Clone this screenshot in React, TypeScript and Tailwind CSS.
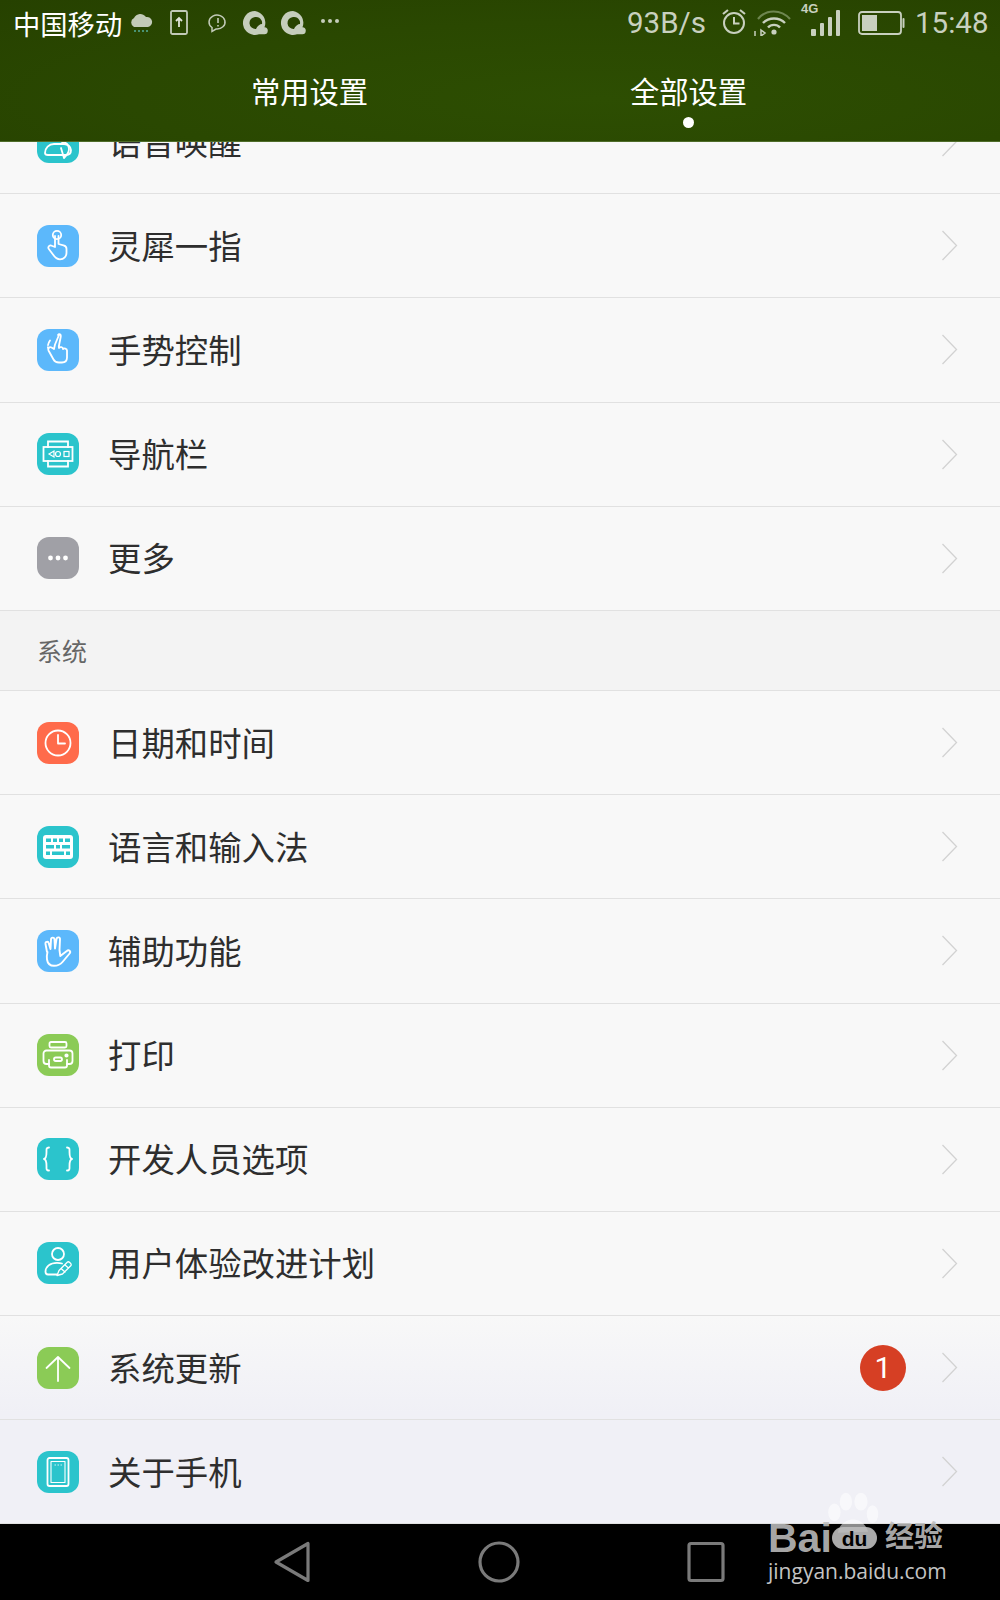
import React from "react";

const S = { fill: "none", stroke: "white", strokeWidth: 1.8, strokeLinecap: "round" as const, strokeLinejoin: "round" as const };

const Voice = () => (
  <g {...S}>
    <path d="M8 32c0-5 4-9 9-9h10c4 0 7 3 7 6s-2 5-5 5H11c-2 0-3-1-3-2z" />
    <path d="M25 21c4 0 7 3 7 7s-2 6-5 9M24 27l3 10" />
  </g>
);
const Tap = () => (
  <g {...S}>
    <circle cx="20" cy="10" r="4.2" />
    <path d="M18 11v11l-4-1.500a2.200 2.200 0 0 0-2 3.700l4 5.300c2 3 4.500 4.800 7 4.800 4 0 6.500-3 6.500-6.500v-4c0-2-1-3-3-3.500l-5-1.300V11" />
  </g>
);
const Gesture = () => (
  <g {...S}>
    <path d="M13 11.500A10 10 0 0 0 11 19" strokeDasharray="5 2" />
    <path d="M22 6l-4 9.500-1 4.500-2.500-1.500c-2-1-4 1-3 3l5 9c1 2 3 3 5.500 3h3c3 0 5-2 5-5v-7c0-2-3-2.500-4-1.500 0-2-3-2.500-4-1l-.2-1.500 2-10c.4-2-1.600-3.500-2.800-1.500z" />
  </g>
);
const Nav = () => (
  <g {...S} strokeLinecap="square" strokeLinejoin="miter">
    <path d="M11 14V8.500h20V14M11 28v5.500h20V28" />
    <rect x="6.500" y="14" width="29" height="14" />
    <path d="M12 21l5-3v6z" strokeWidth="1.200" />
    <circle cx="21" cy="21" r="2.500" strokeWidth="1.200" />
    <rect x="27" y="18.500" width="5" height="5" strokeWidth="1.200" />
  </g>
);
const Dots = () => (
  <g fill="white">
    <circle cx="13.500" cy="21" r="2.400" />
    <circle cx="21" cy="21" r="2.400" />
    <circle cx="28.500" cy="21" r="2.400" />
  </g>
);
const Clock = () => (
  <g {...S}>
    <circle cx="21" cy="21" r="12.500" />
    <path d="M21 13v8.500h7" />
  </g>
);
const Keyboard = () => (
  <g>
    <rect x="6" y="9" width="30" height="24" rx="3" fill="white" />
    <g fill="#2bc4cc">
      <rect x="9" y="12.500" width="5" height="3.500" />
      <rect x="16" y="12.500" width="4" height="3.500" />
      <rect x="22" y="12.500" width="4" height="3.500" />
      <rect x="28" y="12.500" width="5" height="3.500" />
      <rect x="9" y="19" width="8" height="3.500" />
      <rect x="19" y="19" width="4" height="3.500" />
      <rect x="25" y="19" width="8" height="3.500" />
      <rect x="9" y="25.500" width="4" height="3.500" />
      <rect x="15" y="25.500" width="12" height="3.500" />
      <rect x="29" y="25.500" width="4" height="3.500" />
    </g>
  </g>
);
const Hand = () => (
  <g {...S} strokeWidth="1.900">
    <path d="M10 22L8.500 14c-.4-2.500 2.800-3 3.300-.6L13.500 19l.5-9.500c.1-2.600 3.400-2.500 3.500 0l.5 9 1.500-9.500c.5-2.500 3.800-2 3.500.5L22.500 20l.8 6 6.500-5c2-1.800 4.500.5 2.800 2.500l-7.100 8.500c-2 2.500-5 3.800-8.500 3.800-4.500 0-6.500-3-7-6.300-.3-2.500-.3-4.500.5-7.500z" />
  </g>
);
const Printer = () => (
  <g {...S} strokeWidth="1.800">
    <rect x="12.500" y="8" width="17" height="5.500" rx="1.500" />
    <path d="M12 30H9.500A3 3 0 0 1 6.500 27v-7.500a3 3 0 0 1 3-3h23a3 3 0 0 1 3 3V27a3 3 0 0 1-3 3H30" />
    <path d="M12 26v5.500a2 2 0 0 0 2 2h14a2 2 0 0 0 2-2V26" />
    <rect x="17" y="23.500" width="8" height="3.500" rx="1.700" />
    <circle cx="29.500" cy="21.500" r="1.200" fill="white" />
  </g>
);
const Braces = () => (
  <g {...S}>
    <path d="M12 9.500c-3 0-2.500 2-2.500 4.500s0 6.500-2.500 7c2.500.5 2.500 4.500 2.500 7s-.5 4.500 2.500 4.500" />
    <path d="M30 9.500c3 0 2.500 2 2.500 4.500s0 6.500 2.500 7c-2.500.5-2.500 4.500-2.500 7s.5 4.500-2.500 4.500" />
  </g>
);
const User = () => (
  <g {...S}>
    <circle cx="21" cy="12" r="6" />
    <path d="M25 21.500c-1.500-.5-3-.7-5-.7-7 0-11.500 4-11.500 9 0 1.800 1 2.700 2.500 2.700h9" />
    <path d="M20 33.500l2-5 8.500-8.500c1-1 4.500 2 3.500 3.500L25.500 32zM24 26.500l4 3.500M28 23l3.500 3" strokeWidth="1.300" />
  </g>
);
const Up = () => (
  <g {...S}>
    <path d="M21 34V10M9.500 21L21 10l11.500 11" />
  </g>
);
const Phone = () => (
  <g {...S}>
    <rect x="10.500" y="7" width="21" height="28" rx="2" />
    <rect x="14" y="10.500" width="14" height="21" strokeWidth="1.100" />
    <path d="M18 14h.4M21 14h.4M24 14h.4" strokeWidth="1" />
  </g>
);

const Icon = ({ bg, children }: { bg: string; children: React.ReactNode }) => (
  <span className={`block w-[42px] h-[42px] rounded-[12px] shrink-0 ${bg}`}>
    <svg width="42" height="42" viewBox="0 0 42 42">{children}</svg>
  </span>
);

const Chevron = () => (
  <svg width="17" height="31" viewBox="0 0 17 31" className="absolute left-[941px]">
    <path d="M1.500 1L15.500 15.500L1.500 30" fill="none" stroke="#d2d2d2" strokeWidth="1.300" />
  </svg>
);

const Row = ({ bg, icon, label, badge, cls }: { bg: string; icon: React.ReactNode; label: string; badge?: boolean; cls?: string }) => (
  <div className={`relative flex items-center shrink-0 h-[104.2px] pl-[37px] border-b-[1.500px] border-[#e1e1e1] ${cls ?? ""}`}>
    <Icon bg={bg}>{icon}</Icon>
    <span className="ml-[29px] mb-[2px] text-[33.4px] leading-[42px] text-[#2e2e2e]">{label}</span>
    {badge && (
      <span className="absolute left-[860px] w-[46px] h-[46px] rounded-full bg-[#d63f24] flex items-center justify-center text-white text-[30px] leading-none font-['Roboto',sans-serif]">
        1
      </span>
    )}
    <Chevron />
  </div>
);

const TEAL = "bg-[#2bc4cc]";
const BLUE = "bg-[#5cb8fb]";
const GREEN = "bg-[#8bcb56]";

export default function App() {
  return (
    <div className="relative w-[1000px] h-[1600px] overflow-hidden bg-black font-['Noto_Sans_CJK_SC','Noto_Sans',sans-serif]">
      <header className="relative z-10 h-[142px] border-b border-[#4f6d2a] bg-[radial-gradient(ellipse_at_60%_70%,#2d4e02_0%,#2a4801_55%,#264100_100%)]">
        <div className="flex items-center h-[46px] pl-[13px]">
          <span className="text-[27.3px] leading-[46px] text-white w-[113px]">中国移动</span>
          <svg width="26" height="22" viewBox="0 0 26 22" className="ml-[2px]">
            <path d="M6 15a5 5 0 0 1 0-9 7 7 0 0 1 12-1 5 5 0 0 1 2 10z" fill="#c2cab8" />
            <path d="M7 18v2M11 18v2M15 18v2M19 18v2" stroke="#5fc6c0" strokeWidth="1.200" />
          </svg>
          <svg width="18" height="26" viewBox="0 0 18 26" className="ml-[16px]">
            <rect x="1" y="1" width="16" height="23" rx="1.500" fill="none" stroke="#c2cab8" strokeWidth="1.800" />
            <path d="M9 17V8M6 11l3-3 3 3" fill="none" stroke="#e0e4da" strokeWidth="1.800" />
          </svg>
          <svg width="20" height="20" viewBox="0 0 20 20" className="ml-[20px]">
            <path d="M4 14.500A8 7 0 1 1 8 16l-4 2.500z" fill="none" stroke="#c2cab8" strokeWidth="1.500" />
            <path d="M10 5v5M10 12v1.500" stroke="#c2cab8" strokeWidth="1.600" />
          </svg>
          <svg width="26" height="26" viewBox="0 0 26 26" className="ml-[14px]">
            <path d="M13 1a12 12 0 1 0 4 23.300h5a3.500 3.500 0 0 0 .5-7A12 12 0 0 0 13 1z" fill="#c5cdbc" />
            <path d="M13 7a6 6 0 1 0 1 12c1-3 4-5 6-5A6 6 0 0 0 13 7z" fill="#284300" />
          </svg>
          <svg width="26" height="26" viewBox="0 0 26 26" className="ml-[12px]">
            <path d="M13 1a12 12 0 1 0 4 23.300h5a3.500 3.500 0 0 0 .5-7A12 12 0 0 0 13 1z" fill="#c5cdbc" />
            <path d="M13 7a6 6 0 1 0 1 12c1-3 4-5 6-5A6 6 0 0 0 13 7z" fill="#284300" />
          </svg>
          <svg width="20" height="6" viewBox="0 0 20 6" className="ml-[14px] mb-[4px]">
            <circle cx="3" cy="3" r="2" fill="#c5cdbc" />
            <circle cx="10" cy="3" r="2" fill="#c5cdbc" />
            <circle cx="17" cy="3" r="2" fill="#c5cdbc" />
          </svg>
          <span className="ml-[287px] w-[86px] text-[29.5px] leading-[46px] text-[#c8d0bf] font-['Roboto',sans-serif]">93B/s</span>
          <svg width="26" height="27" viewBox="0 0 26 27" className="ml-[8px] mb-[3px]">
            <circle cx="13" cy="15" r="10" fill="none" stroke="#c8d0bf" strokeWidth="2" />
            <path d="M13 9v6.500h5.500" fill="none" stroke="#c8d0bf" strokeWidth="2" />
            <path d="M2 6l5-4M24 6l-5-4" stroke="#c8d0bf" strokeWidth="2.200" />
          </svg>
          <svg width="38" height="28" viewBox="0 0 38 28" className="ml-[7px] mb-[3px]">
            <path d="M4 11C12 1 27 1 36 11" fill="none" stroke="#6e8650" strokeWidth="2.200" />
            <path d="M9 15c6-6 16-6 22 0M14 19.500c3-3.500 9-3.500 12 0" fill="none" stroke="#c8d0bf" strokeWidth="2.400" />
            <circle cx="20" cy="24" r="2.600" fill="#c8d0bf" />
            <path d="M1 28v-5M7 22l4 3-4 3z" fill="none" stroke="#c8d0bf" strokeWidth="1.500" />
          </svg>
          <div className="relative ml-[9px] w-[42px] h-[36px]">
            <span className="absolute left-0 top-[-3px] text-[13px] leading-[13px] font-bold text-[#c8d0bf] font-['Liberation_Sans',sans-serif]">4G</span>
            <svg width="32" height="26" viewBox="0 0 32 26" className="absolute left-[9px] top-[5px]">
              <rect x="1" y="19" width="5" height="7" rx="1" fill="#c8d0bf" />
              <rect x="10" y="13" width="4" height="13" rx="1" fill="#c8d0bf" />
              <rect x="18" y="7" width="4" height="19" rx="1" fill="#c8d0bf" />
              <rect x="26" y="0" width="4" height="26" rx="1" fill="#c8d0bf" />
            </svg>
          </div>
          <svg width="47" height="24" viewBox="0 0 47 24" className="ml-[15px]">
            <rect x="1" y="1" width="42" height="22" rx="3" fill="none" stroke="#c8d0bf" strokeWidth="1.800" />
            <rect x="4" y="4" width="15" height="16" fill="#c8d0bf" />
            <rect x="44.500" y="7" width="2" height="10" rx="1" fill="#c8d0bf" />
          </svg>
          <span className="ml-[10px] text-[29.5px] leading-[46px] text-[#c8d0bf] font-['Roboto',sans-serif]">15:48</span>
        </div>
        <div className="grid grid-cols-2 pl-[120px] pr-[122px]">
          <div className="flex justify-center"><span className="mt-[24px] text-[29.3px] leading-[40px] text-white">常用设置</span></div>
          <div className="relative flex justify-center">
            <span className="mt-[24px] text-[29.3px] leading-[40px] text-white">全部设置</span>
            <span className="absolute top-[71px] w-[11px] h-[11px] rounded-full bg-white" />
          </div>
        </div>
      </header>

      <main className="flex flex-col h-[1382px] bg-[linear-gradient(to_bottom,#f8f8f8_0%,#f8f8f8_85%,#f0f0f6_92%,#f0f0f6_100%)]">
        <div className="flex flex-col -mt-[52px]">
          <Row bg={TEAL} icon={<Voice />} label="语音唤醒" />
          <Row bg={BLUE} icon={<Tap />} label="灵犀一指" />
          <Row bg={BLUE} icon={<Gesture />} label="手势控制" />
          <Row bg={TEAL} icon={<Nav />} label="导航栏" />
          <Row bg="bg-[#a0a0a6]" icon={<Dots />} label="更多" />
          <div className="flex items-center shrink-0 h-[80px] pl-[37px] bg-[#f3f3f3] border-b-[1.500px] border-[#e1e1e1] text-[25px] text-[#666666]">系统</div>
          <Row bg="bg-[#ff6b4b]" icon={<Clock />} label="日期和时间" />
          <Row bg={TEAL} icon={<Keyboard />} label="语言和输入法" />
          <Row bg={BLUE} icon={<Hand />} label="辅助功能" />
          <Row bg={GREEN} icon={<Printer />} label="打印" />
          <Row bg={TEAL} icon={<Braces />} label="开发人员选项" />
          <Row bg={TEAL} icon={<User />} label="用户体验改进计划" />
          <Row bg={GREEN} icon={<Up />} label="系统更新" badge />
          <Row bg={TEAL} icon={<Phone />} label="关于手机" cls="border-b-0" />
        </div>
      </main>

      <nav className="flex items-center justify-center gap-[165px] h-[76px] pr-[2px]">
        <svg width="42" height="44" viewBox="0 0 42 44">
          <path d="M5 22L37 3.500V40.500z" fill="none" stroke="#7a7a7a" strokeWidth="3.200" strokeLinejoin="round" />
        </svg>
        <svg width="42" height="44" viewBox="0 0 42 44">
          <circle cx="21" cy="22" r="19" fill="none" stroke="#7a7a7a" strokeWidth="3.200" />
        </svg>
        <svg width="42" height="44" viewBox="0 0 42 44">
          <rect x="4" y="3.500" width="34" height="37" rx="2" fill="none" stroke="#7a7a7a" strokeWidth="3.200" />
        </svg>
      </nav>

      <div className="absolute left-[765px] top-[1490px] w-[190px] h-[100px] font-['Liberation_Sans',sans-serif]">
        <svg width="62" height="46" viewBox="0 0 70 50" className="absolute left-[57px] top-[2px]">
          <g fill="white" fillOpacity="0.55">
            <ellipse cx="14" cy="22" rx="7" ry="10" />
            <ellipse cx="27" cy="10" rx="7" ry="10" />
            <ellipse cx="44" cy="10" rx="7.500" ry="10" />
            <ellipse cx="57" cy="24" rx="6.500" ry="10" />
            <path d="M18 45c1-9 9-15 17-15s15 6 17 14z" />
          </g>
        </svg>
        <span className="absolute left-[3px] top-[25px] text-[41px] leading-[46px] font-bold text-[#bdbdbd]/90">Bai</span>
        <span className="absolute left-[67px] top-[37px] w-[45px] h-[22px] rounded-[11px] bg-[#bdbdbd]/90 flex items-center justify-center text-[21px] leading-none font-bold text-black">du</span>
        <span className="absolute left-[120px] top-[24px] text-[29px] leading-[40px] font-bold text-[#bdbdbd]/90 font-['Noto_Sans_CJK_SC',sans-serif]">经验</span>
        <span className="absolute left-[3px] top-[68px] text-[21px] leading-[26px] text-[#c4c4c4] font-['Open_Sans',sans-serif]">jingyan.baidu.com</span>
      </div>
    </div>
  );
}
